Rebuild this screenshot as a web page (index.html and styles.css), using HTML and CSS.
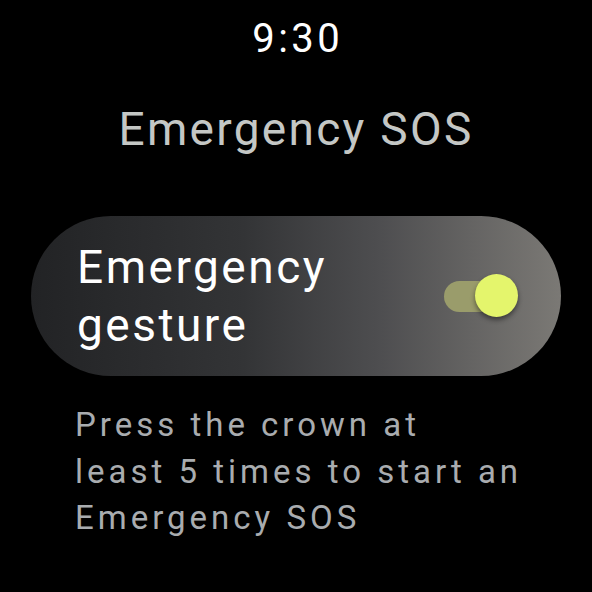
FILE: index.html
```html
<!DOCTYPE html>
<html>
<head>
<meta charset="utf-8">
<link rel="stylesheet" href="styles.css">
</head>
<body>
<div class="screen">
  <div class="time">9:30</div>
  <h1 class="title">Emergency SOS</h1>
  <div class="card">
    <div class="card-label">Emergency<br>gesture</div>
    <div class="toggle">
      <div class="track"></div>
      <div class="thumb"></div>
    </div>
  </div>
  <p class="desc">Press the crown at<br>least 5 times to start an<br>Emergency SOS</p>
</div>
</body>
</html>
```
FILE: styles.css
```css
html, body {
  margin: 0;
  padding: 0;
  background: #000;
}
.screen {
  width: 592px;
  height: 592px;
  overflow: hidden;
  display: flex;
  flex-direction: column;
  align-items: center;
  font-family: Roboto, "Noto Sans", sans-serif;
}
.time {
  margin-top: 15px;
  font-size: 40px;
  line-height: 48px;
  color: #fff;
  font-weight: 400;
  letter-spacing: 3.5px;
  padding-left: 3.5px;
}
.title {
  margin: 38px 0 0 0;
  font-size: 46px;
  line-height: 56px;
  font-weight: 400;
  color: #c4c7c5;
  letter-spacing: 2.3px;
}
.card {
  margin-top: 59px;
  width: 530px;
  height: 160px;
  flex: none;
  border-radius: 80px;
  background: linear-gradient(90deg, #222325 0%, #333436 40%, #4e4e50 66%, #7b7975 100%);
  display: flex;
  align-items: center;
  justify-content: space-between;
  box-sizing: border-box;
  padding: 0 41px 0 46px;
}
.card-label {
  font-size: 46px;
  line-height: 58px;
  color: #fff;
  font-weight: 400;
  letter-spacing: 2.5px;
}
.toggle {
  position: relative;
  width: 76px;
  height: 44px;
}
.track {
  position: absolute;
  left: 0;
  top: 6.5px;
  width: 72px;
  height: 31px;
  border-radius: 16px;
  background: #9a9c6b;
}
.thumb {
  position: absolute;
  right: 2px;
  top: 0;
  width: 43px;
  height: 43px;
  border-radius: 50%;
  background: #e4f56c;
  box-shadow: 0 3px 5px rgba(0,0,0,0.45);
}
.desc {
  margin: 26px 0 0 0;
  align-self: flex-start;
  padding-left: 75px;
  font-size: 33px;
  line-height: 46.5px;
  color: #a9acaf;
  letter-spacing: 4px;
}
```
